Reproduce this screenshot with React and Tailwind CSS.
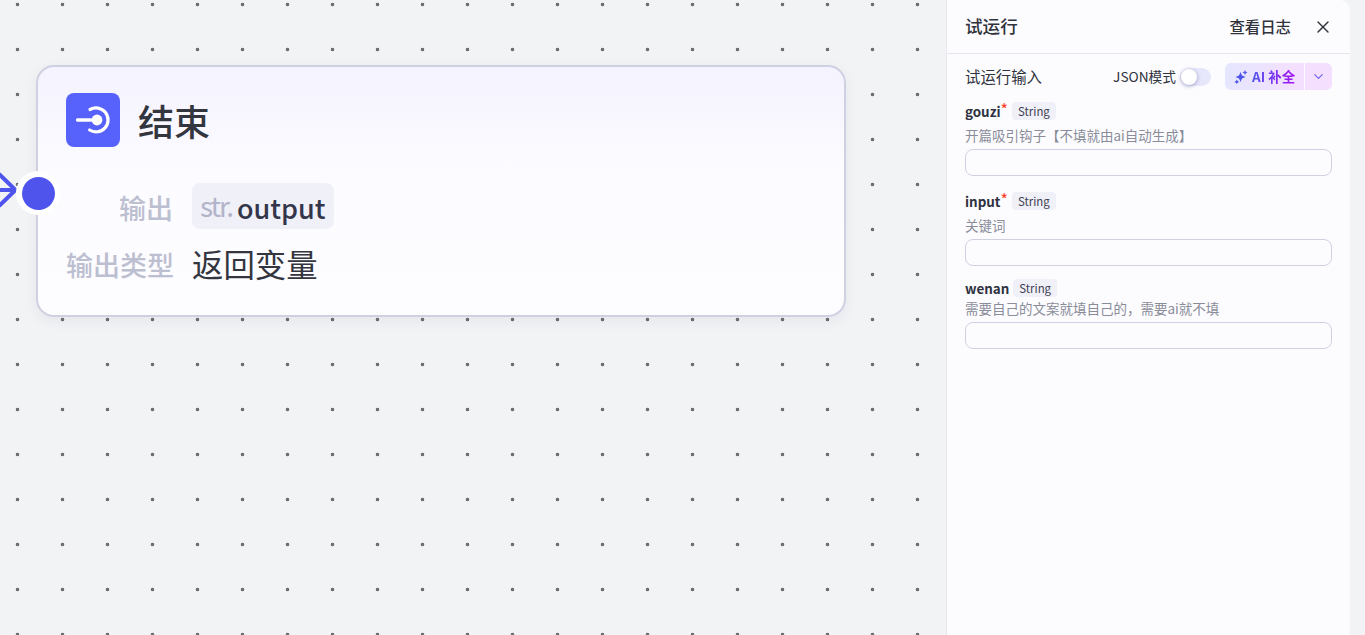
import { X, ChevronDown } from 'lucide-react';

const fields = [
  { name: 'gouzi', required: true, desc: '开篇吸引钩子【不填就由ai自动生成】', descClass: 'mt-[5px]', className: 'mt-[12px]' },
  { name: 'input', required: true, desc: '关键词', descClass: 'mt-[5px]', className: 'mt-[16px]' },
  { name: 'wenan', required: false, desc: '需要自己的文案就填自己的，需要ai就不填', descClass: 'mt-[1px]', className: 'mt-[13px]' },
];

const Field = ({ name, required, desc, descClass, className }) => (
  <div className={className}>
    <div className="flex items-center h-[18px]">
      <span className="text-[13.4px] leading-[18px] font-semibold text-[#2f3240]">{name}</span>
      {required && <span className="text-[16px] leading-[18px] text-[#f93920] -mt-1">*</span>}
      <span className="ml-[4px] h-[18px] px-1.5 rounded-[4px] bg-[#f0f0f8] text-[11.4px] leading-[18px] text-[#3d4052]">String</span>
    </div>
    <div className={`${descClass} text-[13.5px] leading-[20px] text-[#8a8c99]`}>{desc}</div>
    <input className="mt-[4px] block w-full h-[27px] rounded-[8px] border border-[#cfd0e2] bg-transparent outline-none" />
  </div>
);

const EndNode = () => (
  <div className="absolute left-[36px] top-[65px] w-[810px] h-[252px] rounded-[18px] border-2 border-[#cfd1e3] bg-[linear-gradient(180deg,#f4f3ff_0%,#fcfbff_40%,#fdfcff_100%)] shadow-[0_4px_14px_rgba(30,30,60,0.06)]">
    <div className="flex items-center ml-[28px] mt-[26px] h-[54px]">
      <div className="w-[54px] h-[54px] rounded-[8px] bg-[#5761fb] flex items-center justify-center">
        <svg width="54" height="54" viewBox="0 0 54 54" fill="none">
          <path d="M11.5 27H25" stroke="white" strokeWidth="3.4" strokeLinecap="round" />
          <circle cx="31" cy="27" r="5.4" fill="white" />
          <path d="M24 16.5A12 12 0 1 1 23.6 37" stroke="white" strokeWidth="3.2" strokeLinecap="round" />
        </svg>
      </div>
      <div className="ml-[18px] text-[36px] leading-[54px] font-medium text-[#33353f]">结束</div>
    </div>
    <div className="flex ml-[28px] mt-[36px] h-[46px]">
      <div className="w-[107px] text-right text-[27px] leading-[46px] font-medium text-[#bcbfd0] pt-[2px] whitespace-nowrap">输出</div>
      <div className="ml-[19px] h-[46px] w-[142px] rounded-[8px] bg-[#f0f0f8] flex items-center pl-2">
        <span className="text-[28px] leading-[46px] tracking-[-2px] text-[#b2b5c9] -mt-[3px]">str.</span>
        <span className="ml-[5px] text-[27px] leading-[46px] font-medium text-[#33364a] mt-[3px]">output</span>
      </div>
    </div>
    <div className="flex ml-[28px] mt-[11px] h-[46px]">
      <div className="w-[107px] text-right text-[27px] leading-[46px] font-medium text-[#bcbfd0] whitespace-nowrap pt-[2px]">输出类型</div>
      <div className="ml-[19px] text-[31.4px] leading-[46px] text-[#33353f] whitespace-nowrap pt-px">返回变量</div>
    </div>
    <div className="absolute left-[-22px] top-[104px] w-[44px] h-[44px] rounded-full bg-white flex items-center justify-center">
      <div className="w-[33px] h-[33px] rounded-full bg-[#4f55ec]" />
    </div>
  </div>
);

const Panel = () => (
  <aside className="w-[404px] h-full shrink-0 bg-[#fcfcff] border-l border-[#e8e8f0] rounded-tr-[10px]">
    <div className="h-[54px] border-b border-[#e6e6f0] pl-[18px] pr-[17px] flex items-center">
      <div className="text-[17.6px] font-medium text-[#30323c]">试运行</div>
      <div className="ml-auto text-[15.4px] font-medium text-[#30323c]">查看日志</div>
      <X className="ml-[22px] w-[20px] h-[20px] text-[#33353f]" strokeWidth={1.7} />
    </div>
    <div className="px-[18px]">
      <div className="mt-[9px] flex items-center h-[27px]">
        <div className="text-[15.4px] text-[#30323c]">试运行输入</div>
        <div className="ml-auto text-[13.7px] text-[#30323c]">JSON模式</div>
        <div className="ml-[4px] w-[31px] h-[18px] rounded-full bg-[#e6e7fb] relative">
          <div className="absolute left-px top-px w-4 h-4 rounded-full bg-white shadow-[0_1px_4px_rgba(40,40,110,0.4)]" />
        </div>
        <div className="ml-[14px] flex h-[27px]">
          <div className="w-[79px] h-full rounded-l-[6px] bg-[linear-gradient(90deg,#e5e6ff,#f5dfff)] flex items-center pl-[9px]">
            <svg width="14" height="14" viewBox="0 0 14 14" fill="#4f55ec">
              <path d="M6.5 2l1.5 3.5 3.5 1.500-3.5 1.500L6.500 12 5 8.500 1.500 7 5 5.500z" />
              <path d="M11 0l.8 1.700 1.700.8-1.700.8-.8 1.700-.8-1.700-1.700-.8 1.700-.8z" />
              <path d="M2.800 9.500l.8 1.600 1.600.8-1.600.8-.8 1.300-.8-1.300-1.600-.8 1.600-.8z" />
            </svg>
            <span className="ml-[4px] text-[13.5px] font-semibold text-transparent bg-clip-text bg-[linear-gradient(90deg,#4f55ec,#a512f0)] whitespace-nowrap">AI 补全</span>
          </div>
          <div className="ml-px w-[27px] h-full rounded-r-[6px] bg-[#f4dfff] flex items-center justify-center">
            <ChevronDown className="w-[15px] h-[15px] text-[#6b5cf0]" strokeWidth={1.7} />
          </div>
        </div>
      </div>
      {fields.map((f) => (
        <Field key={f.name} {...f} />
      ))}
    </div>
  </aside>
);

export default function App() {
  return (
    <div className="w-[1365px] h-[635px] flex overflow-hidden bg-[#f2f3f5] font-['Noto_Sans_CJK_SC','Noto_Sans',sans-serif]">
      <main className="relative w-[946px] h-full shrink-0 overflow-hidden bg-[radial-gradient(circle,#6f7075_1.6px,transparent_2.1px)] bg-size-[45px_45px] bg-position-[-5px_-18px]">
        <svg className="absolute left-0 top-[172px]" width="20" height="36" viewBox="0 0 20 36" fill="none">
          <path d="M0 18H15M-1 2L15.500 18L-1 34" stroke="#4f55ec" strokeWidth="4" />
        </svg>
        <EndNode />
      </main>
      <Panel />
    </div>
  );
}
